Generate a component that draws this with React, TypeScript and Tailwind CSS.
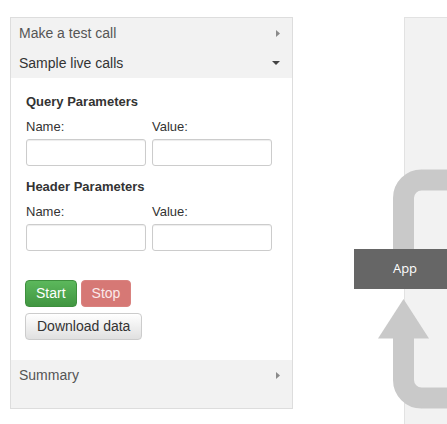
import React from "react";

const font = { fontFamily: '"Liberation Sans", Arial, sans-serif' };

function CaretRight() {
  return (
    <svg width="4" height="7" viewBox="0 0 4 7" className="block">
      <path d="M0 0 L4 3.5 L0 7 Z" fill="#8a8a8a" />
    </svg>
  );
}

function CaretDown() {
  return (
    <svg width="8" height="4" viewBox="0 0 8 4" className="block">
      <path d="M0 0 L8 0 L4 4 Z" fill="#444" />
    </svg>
  );
}

function Row({ label, open, dark }: { label: string; open?: boolean; dark?: boolean }) {
  return (
    <div className="flex h-[30px] items-center justify-between pl-[8px] pr-[12px]">
      <span className={`text-[14px] ${dark ? "text-[#333]" : "text-[#555]"}`}>{label}</span>
      {open ? <CaretDown /> : <CaretRight />}
    </div>
  );
}

function ParamBlock({ title }: { title: string }) {
  return (
    <div className="flex flex-col">
      <div className="text-[13px] font-bold leading-[18px] text-[#333]">{title}</div>
      <div className="mt-[7px] grid grid-cols-[120px_120px] gap-x-[6px]">
        <div className="text-[13px] leading-[17px] text-[#333]">Name:</div>
        <div className="text-[13px] leading-[17px] text-[#333]">Value:</div>
        <input className="mt-[4px] h-[27px] rounded-[3px] border border-[#ccc] bg-white shadow-[inset_0_1px_1px_rgba(0,0,0,0.075)] outline-none" />
        <input className="mt-[4px] h-[27px] rounded-[3px] border border-[#ccc] bg-white shadow-[inset_0_1px_1px_rgba(0,0,0,0.075)] outline-none" />
      </div>
    </div>
  );
}

export default function App() {
  return (
    <div className="relative h-[424px] w-[447px] overflow-hidden bg-white" style={font}>
      <div className="flex pt-[17px]">
        <div className="ml-[10px] flex h-[392px] w-[283px] flex-col border border-[#ddd] bg-[#f2f2f2]">
          <Row label="Make a test call" />
          <Row label="Sample live calls" open dark />
          <div className="flex flex-col bg-white px-[15px] pb-[20px] pt-[15px]">
            <ParamBlock title="Query Parameters" />
            <div className="mt-[12px]">
              <ParamBlock title="Header Parameters" />
            </div>
            <div className="ml-[-1px] mt-[29px] flex gap-[4px]">
              <button className="h-[27px] rounded-[4px] border border-[#3e8f3e] bg-gradient-to-b from-[#5cb85c] to-[#419641] px-[10px] text-[14px] text-white">
                Start
              </button>
              <button className="h-[27px] rounded-[4px] border border-[#d9827f] bg-[#d67875] px-[10px] text-[14px] text-[#fbe9e9]">
                Stop
              </button>
            </div>
            <div className="ml-[-1px] mt-[6px] flex">
              <button className="h-[27px] rounded-[4px] border border-[#ccc] bg-gradient-to-b from-white to-[#e0e0e0] px-[11px] text-[14px] text-[#333]">
                Download data
              </button>
            </div>
          </div>
          <Row label="Summary" />
        </div>
        <div className="ml-[111px] h-[420px] flex-1 border-l border-t border-[#e2e2e2] bg-[#f2f2f2]" />
      </div>

      <svg className="absolute left-0 top-0" width="447" height="424" viewBox="0 0 447 424">
        <path d="M403.5 250 V198 A18 18 0 0 1 421.5 180 H460" fill="none" stroke="#c9c9c9" strokeWidth="21" />
        <path d="M403.5 337 V380 A18 18 0 0 0 421.5 398 H460" fill="none" stroke="#c9c9c9" strokeWidth="21" />
        <path d="M403.5 299 L378 338.5 L429 338.5 Z" fill="#c9c9c9" />
      </svg>
      <div
        className="absolute left-[354px] top-[249px] flex h-[40px] w-[102px] items-center justify-center bg-[#666] text-[13px] text-white"
        style={{ fontFamily: '"Open Sans", "Noto Sans", sans-serif' }}
      >
        App
      </div>
    </div>
  );
}
